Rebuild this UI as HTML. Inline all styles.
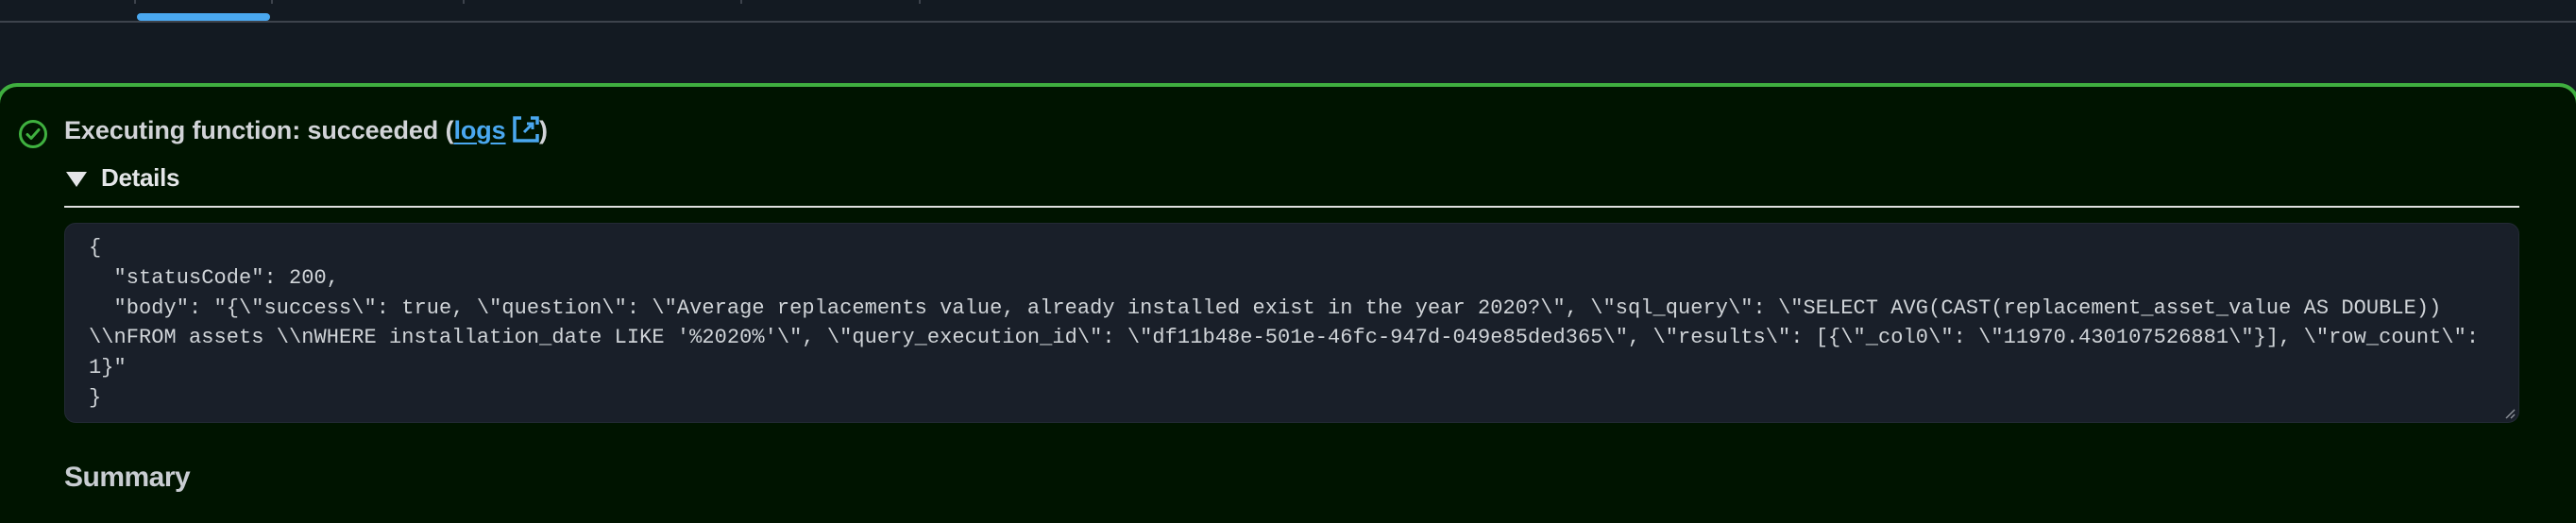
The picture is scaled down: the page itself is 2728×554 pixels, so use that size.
<!DOCTYPE html>
<html><head><meta charset="utf-8"><style>
html,body{margin:0;padding:0;width:2728px;height:554px;overflow:hidden;background:#131a22;font-family:"Liberation Sans",sans-serif;}
.hdr{position:absolute;left:0;top:0;width:2728px;height:23px;}
.sep{position:absolute;top:0;width:2px;height:4px;background:#3d434c;}
.ind{position:absolute;left:145px;top:14px;width:141px;height:8px;border-radius:4px;background:#4aa8f0;}
.hline{position:absolute;left:0;top:22px;width:2728px;height:2px;background:#3d434c;}
.panel{position:absolute;left:-4px;top:88px;width:2728px;height:462px;background:#001400;border:4px solid #3fae3f;border-radius:22px 22px 0 0;border-bottom:none;}
.title{position:absolute;left:68px;top:123px;font-size:27px;font-weight:bold;color:#d2d4d8;white-space:nowrap;letter-spacing:-0.1px;}
.title a{color:#4aa8f0;text-decoration:underline;text-underline-offset:4px;}
.det{position:absolute;left:107px;top:173px;font-size:26px;font-weight:bold;color:#e4e6e8;letter-spacing:-0.3px;}
.tri{position:absolute;left:70px;top:182px;width:0;height:0;border-left:11px solid transparent;border-right:11px solid transparent;border-top:16px solid #e4e6e8;}
.div{position:absolute;left:68px;top:218px;width:2600px;height:2px;background:#e0e0e0;}
.code{position:absolute;left:68px;top:236px;width:2598px;height:210px;background:#191f29;border:1px solid #232a35;border-radius:12px;}
.code pre{margin:0;position:absolute;left:25px;top:10px;font-family:"Liberation Mono",monospace;font-size:22px;line-height:31.8px;color:#d0d4d8;letter-spacing:0.05px;}
.sum{position:absolute;left:68px;top:489px;font-size:30px;font-weight:bold;color:#c9cdd2;letter-spacing:-0.5px;}
</style></head><body>
<div class="hdr">
<div class="sep" style="left:142px"></div><div class="sep" style="left:287px"></div><div class="sep" style="left:490px"></div><div class="sep" style="left:784px"></div><div class="sep" style="left:973px"></div>
<div class="ind"></div>
</div>
<div class="hline"></div>
<div class="panel"></div>
<svg style="position:absolute;left:19px;top:126px" width="32" height="32" viewBox="0 0 32 32"><circle cx="16" cy="16" r="13.5" fill="none" stroke="#3fb13f" stroke-width="3"/><path d="M10 16.5l4 4 8-9" fill="none" stroke="#3fb13f" stroke-width="3" stroke-linecap="round" stroke-linejoin="round"/></svg>
<div class="title">Executing function: succeeded (<a>logs</a> <svg width="28" height="28" viewBox="0 0 28 28" style="vertical-align:-4px"><path d="M9 2H2v24h24v-7" fill="none" stroke="#4aa8f0" stroke-width="3.5"/><path d="M15 8h6v6M21 8L12 17" fill="none" stroke="#4aa8f0" stroke-width="3"/><path d="M19 2h7v7" fill="none" stroke="#4aa8f0" stroke-width="3.5"/></svg>)</div>
<div class="tri"></div>
<div class="det">Details</div>
<div class="div"></div>
<div class="code"><pre>{
  "statusCode": 200,
  "body": "{\"success\": true, \"question\": \"Average replacements value, already installed exist in the year 2020?\", \"sql_query\": \"SELECT AVG(CAST(replacement_asset_value AS DOUBLE))
\\nFROM assets \\nWHERE installation_date LIKE '%2020%'\", \"query_execution_id\": \"df11b48e-501e-46fc-947d-049e85ded365\", \"results\": [{\"_col0\": \"11970.430107526881\"}], \"row_count\":
1}"
}</pre>
<svg style="position:absolute;right:3px;bottom:3px" width="12" height="12"><path d="M2 11L11 2M7 11L11 7" stroke="#8a8f96" stroke-width="1.5"/></svg>
</div>
<div class="sum">Summary</div>
</body></html>
